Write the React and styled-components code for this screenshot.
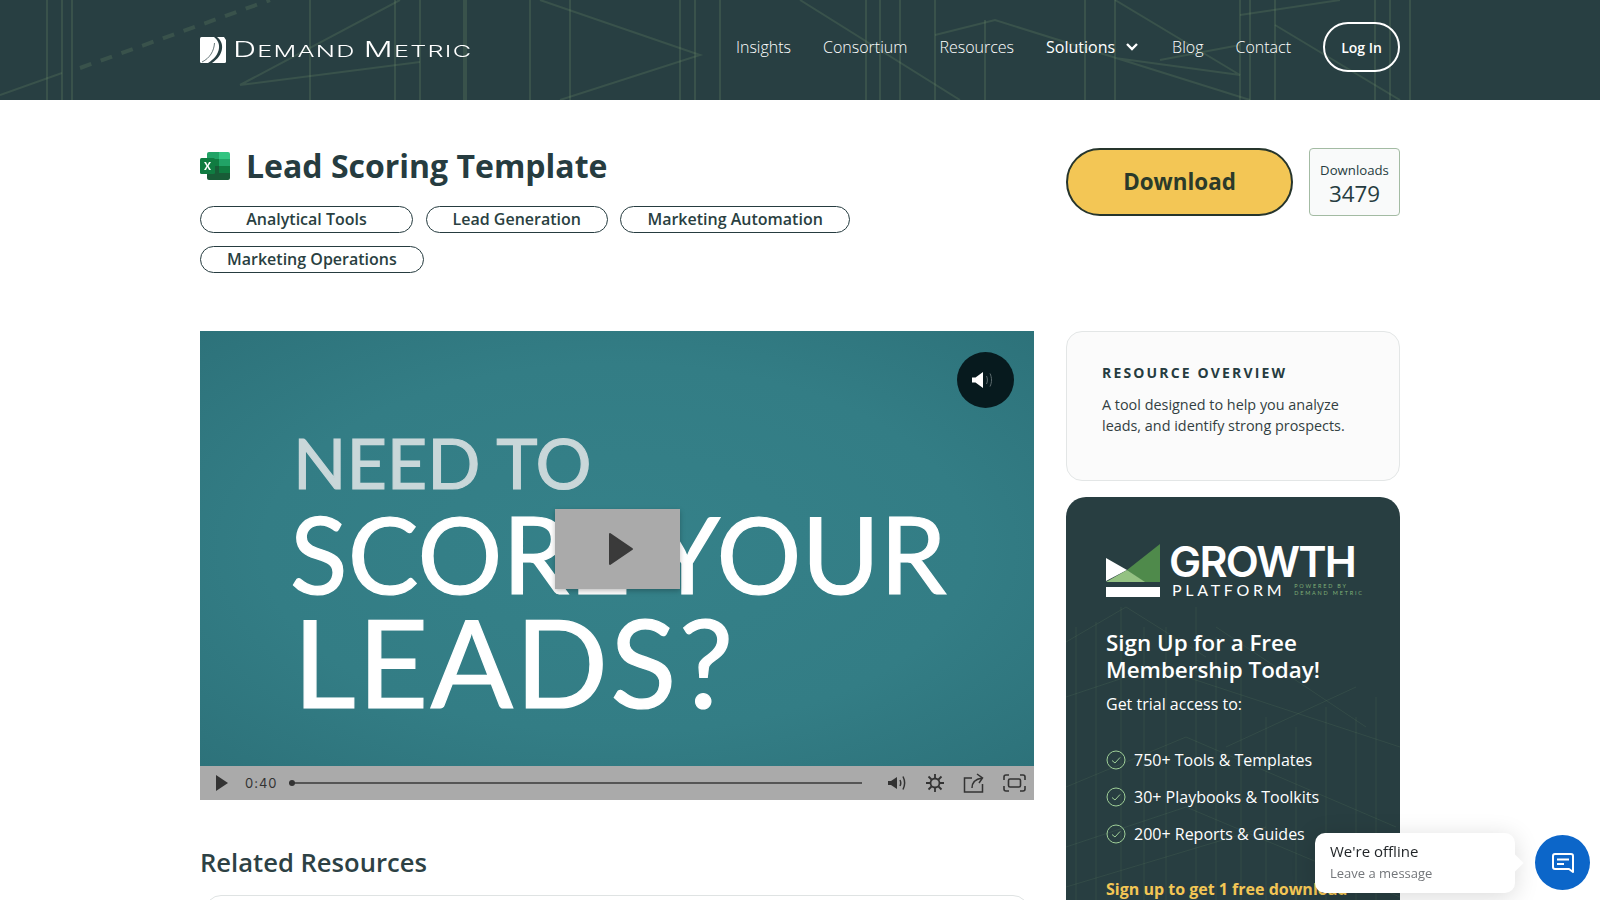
import styled, { createGlobalStyle } from "styled-components";

const GlobalStyle = createGlobalStyle`
  * { box-sizing: border-box; }
  html, body { margin: 0; height: 900px; overflow: hidden; background: #fff; }
  body { font-family: "Open Sans", "Liberation Sans", sans-serif; color: #263c40; }
`;

const navItems = ["Insights", "Consortium", "Resources", "Solutions", "Blog", "Contact"];
const tags = ["Analytical Tools", "Lead Generation", "Marketing Automation", "Marketing Operations"];
const perks = ["750+ Tools & Templates", "30+ Playbooks & Toolkits", "200+ Reports & Guides"];

const App = () => {
  return (
    <>
      <GlobalStyle />
      <Header>
        <HeaderLines viewBox="0 0 1600 100" preserveAspectRatio="none">
          <g stroke="#7f9f73" strokeOpacity="0.2" strokeWidth="2" fill="none">
            <path d="M47 0V100M62 0V100M72 0V100M310 0V100M395 0V100M420 0V100M530 0V100M570 0V100M680 0V100M695 0V100M720 0V100" />
            <path d="M465 0V100" strokeWidth="4" />
            <path d="M866 0V100M880 0V100M900 0V100M935 0V100M985 20V100M1085 0V100M1115 0V100M1240 0V100M1250 0V100M1275 0V100M1375 0V100M1390 0V100M1410 0V100" />
            <path d="M0 95L62 73M240 85L400 0M540 0L700 55L560 100M240 85L420 62" />
            <path d="M80 68L270 0" strokeDasharray="12 10" strokeWidth="4" />
            <path d="M935 35L995 20L1250 100M800 0L960 100M1115 0L1240 75L1115 58M1240 45L1160 60M1240 15L1340 0M1275 25L1400 100" />
          </g>
        </HeaderLines>
        <HeaderInner>
          <Logo>
            <svg width="26" height="26" viewBox="0 0 26 26">
              <rect width="26" height="26" rx="1.500" fill="#fff" />
              <path d="M14 0C22 6 21 18 8 26H12C24 18 25 6 17 0Z" fill="#283f42" />
              <path d="M2 25C10 21 14 14 14.500 6" stroke="#283f42" strokeWidth="0.7" fill="none" />
              <path d="M24 0H26V3Z" fill="#283f42" />
            </svg>
            <LogoText>
              <LogoCap>D</LogoCap>EMAND <LogoCap>M</LogoCap>ETRIC
            </LogoText>
          </Logo>
          <Nav>
            {navItems.map((item) => (
              <NavLink key={item} $active={item === "Solutions"}>
                {item}
                {item === "Solutions" && (
                  <svg width="16" height="10" viewBox="0 0 16 10" fill="none">
                    <path d="M3 2L8 7L13 2" stroke="#fff" strokeWidth="2.400" />
                  </svg>
                )}
              </NavLink>
            ))}
            <LoginButton>Log In</LoginButton>
          </Nav>
        </HeaderInner>
      </Header>

      <Page>
        <TopRow>
          <TitleBlock>
            <TitleRow>
              <svg width="30" height="28" viewBox="0 0 30 28">
                <path d="M7 2a2 2 0 0 1 2-2h10v7H7Z" fill="#21a366" />
                <path d="M19 0h9a2 2 0 0 1 2 2v5H19Z" fill="#33c481" />
                <rect x="7" y="7" width="12" height="7" fill="#107c41" />
                <rect x="19" y="7" width="11" height="7" fill="#21a366" />
                <rect x="7" y="14" width="12" height="7" fill="#185c37" />
                <rect x="19" y="14" width="11" height="7" fill="#107c41" />
                <path d="M7 21h23v5a2 2 0 0 1-2 2H9a2 2 0 0 1-2-2Z" fill="#185c37" />
                <rect y="6" width="15" height="16" rx="1.500" fill="#107c41" />
                <path d="M4 10h2l1.500 3L9 10h2l-2.500 4L11 18H9l-1.500-3L6 18H4l2.500-4Z" fill="#fff" />
              </svg>
              <Title>Lead Scoring Template</Title>
            </TitleRow>
            <Tags>
              {tags.map((tag, i) => (
                <Tag key={tag} $wide={i === 0}>
                  {tag}
                </Tag>
              ))}
            </Tags>
          </TitleBlock>
          <Actions>
            <DownloadButton>Download</DownloadButton>
            <DownloadCount>
              <CountLabel>Downloads</CountLabel>
              <CountValue>3479</CountValue>
            </DownloadCount>
          </Actions>
        </TopRow>

        <Columns>
          <MainColumn>
            <Video>
              <Poster>
                <PosterLine $size={70} $height={69} $muted>
                  NEED TO
                </PosterLine>
                <PosterLine $size={106} $height={105} $top={4} $left={-3} $spacing={0.300}>
                  SCORE YOUR
                </PosterLine>
                <PosterLine $size={122} $height={120} $top={-5} $spacing={2.200}>
                  LEADS?
                </PosterLine>
              </Poster>
              <MuteBadge>
                <svg width="24" height="18" viewBox="0 0 24 18">
                  <path d="M1 6.500h3.500L12 1v16l-7.500-5.500H1Z" fill="#fff" />
                  <path d="M15.500 5c1.200 2.500 1.200 5.500 0 8M19 2.500c2 4 2 9 0 13" stroke="#5d6b6e" strokeWidth="1" fill="none" />
                </svg>
              </MuteBadge>
              <BigPlay>
                <svg width="26" height="34" viewBox="0 0 26 34">
                  <path d="M2 2L24 17L2 32Z" fill="#3a3a3a" stroke="#3a3a3a" strokeWidth="2" strokeLinejoin="round" />
                </svg>
              </BigPlay>
              <ControlBar>
                <svg width="12" height="16" viewBox="0 0 12 16">
                  <path d="M0 0L12 8L0 16Z" fill="#333" />
                </svg>
                <TimeLabel>0:40</TimeLabel>
                <Track />
                <ControlIcons>
                  <svg width="20" height="18" viewBox="0 0 20 18" fill="none">
                    <path d="M1 7h3l6-4v12l-6-4H1Z" fill="#333" />
                    <path d="M13 6c1 2 1 4 0 6M16 2.500c2 4 2 9 0 13" stroke="#333" strokeWidth="1.500" />
                  </svg>
                  <svg width="20" height="20" viewBox="0 0 20 20" fill="none" stroke="#333" strokeWidth="1.800">
                    <circle cx="10" cy="10" r="4.500" />
                    <path d="M10 1v4M10 15v4M1 10h4M15 10h4M3.500 3.500l3 3M13.500 13.500l3 3M16.500 3.500l-3 3M6.500 13.500l-3 3" />
                  </svg>
                  <svg width="22" height="20" viewBox="0 0 22 20" fill="none" stroke="#333" strokeWidth="1.500">
                    <path d="M9 5H1.500v14h18v-8" />
                    <path d="M9 15c0-6 4-9 10-10M14 1l5.500 4L16 10" />
                  </svg>
                  <svg width="23" height="18" viewBox="0 0 23 18" fill="none" stroke="#333" strokeWidth="1.600">
                    <path d="M1 6V3a2 2 0 0 1 2-2h3M17 1h3a2 2 0 0 1 2 2v3M22 12v3a2 2 0 0 1-2 2h-3M6 17H3a2 2 0 0 1-2-2v-3" />
                    <rect x="5.500" y="5" width="12" height="8" rx="1.500" />
                  </svg>
                </ControlIcons>
              </ControlBar>
            </Video>
            <SectionTitle>Related Resources</SectionTitle>
            <RelatedCard />
          </MainColumn>

          <Sidebar>
            <OverviewCard>
              <OverviewTitle>Resource Overview</OverviewTitle>
              <OverviewText>
                A tool designed to help you analyze leads, and identify strong prospects.
              </OverviewText>
            </OverviewCard>
            <GrowthCard>
              <CardLines viewBox="0 0 334 410" preserveAspectRatio="none">
                <g stroke="#7f9f73" strokeOpacity="0.13" fill="none">
                  <path d="M10 130V410M30 125V410M55 110V410M78 130V410M100 130V410M130 110V410M150 140V410M175 180V410M200 220V410M230 230V410M260 210V410M290 220V410M310 200V410" />
                  <path d="M0 145L60 110L140 160M150 130L300 230M0 290L120 240L330 330M0 350L120 310L334 400M160 250L290 190M0 200L90 170L334 250M0 390L200 330" />
                </g>
              </CardLines>
              <GrowthLogo>
                <svg width="54" height="53" viewBox="0 0 54 53">
                  <path d="M0 14L21 26L0 37Z" fill="#fff" />
                  <path d="M54 0V38H38L21 26Z" fill="#4f8a4b" />
                  <path d="M21 26L39 38H0Z" fill="#94c282" />
                  <rect y="43" width="54" height="10" fill="#fff" />
                </svg>
                <GrowthWords>
                  <GrowthTitle>GROWTH</GrowthTitle>
                  <PlatformRow>
                    <PlatformText>PLATFORM</PlatformText>
                    <PoweredBy>
                      POWERED BY
                      <br />
                      DEMAND METRIC
                    </PoweredBy>
                  </PlatformRow>
                </GrowthWords>
              </GrowthLogo>
              <GrowthHeading>Sign Up for a Free Membership Today!</GrowthHeading>
              <TrialText>Get trial access to:</TrialText>
              <PerkList>
                {perks.map((perk) => (
                  <Perk key={perk}>
                    <svg width="20" height="20" viewBox="0 0 20 20" fill="none" stroke="#9fcf98" strokeWidth="1">
                      <circle cx="10" cy="10" r="9" />
                      <path d="M6 10.500L9 13L14 7.500" />
                    </svg>
                    {perk}
                  </Perk>
                ))}
              </PerkList>
              <FreeDownload>Sign up to get 1 free download</FreeDownload>
            </GrowthCard>
          </Sidebar>
        </Columns>
      </Page>

      <ChatBubble>
        <ChatTitle>We're offline</ChatTitle>
        <ChatText>Leave a message</ChatText>
      </ChatBubble>
      <ChatButton>
        <svg width="24" height="24" viewBox="0 0 24 24" fill="none">
          <path d="M4 3h16a2 2 0 0 1 2 2v16l-4-3H4a2 2 0 0 1-2-2V5a2 2 0 0 1 2-2Z" stroke="#fff" strokeWidth="2" strokeLinejoin="round" />
          <path d="M6 8.500h12M6 13h7" stroke="#fff" strokeWidth="2" />
        </svg>
      </ChatButton>
    </>
  );
};

export default App;

const Header = styled.header`
  position: relative;
  height: 100px;
  background: #283f42;
  overflow: hidden;
`;

const HeaderLines = styled.svg`
  position: absolute;
  inset: 0;
  width: 100%;
  height: 100%;
`;

const HeaderInner = styled.div`
  position: relative;
  width: 1200px;
  height: 100%;
  margin: 0 auto;
  display: flex;
  align-items: center;
  justify-content: space-between;
`;

const Logo = styled.div`
  display: flex;
  align-items: center;
  gap: 7px;
`;

const LogoText = styled.span`
  display: inline-block;
  font-family: Inter, sans-serif;
  font-size: 16.500px;
  font-weight: 300;
  line-height: 26px;
  letter-spacing: 0.800px;
  color: #fff;
  white-space: nowrap;
  transform: scaleX(1.53);
  transform-origin: left center;
`;

const LogoCap = styled.span`
  font-size: 21px;
`;

const Nav = styled.nav`
  display: flex;
  align-items: center;
  gap: 32px;
  margin-top: -6px;
`;

const NavLink = styled.a`
  display: flex;
  align-items: center;
  gap: 9px;
  font-size: 16px;
  font-weight: ${(p) => (p.$active ? 500 : 300)};
  color: #fff;
  white-space: nowrap;
`;

const LoginButton = styled.button`
  width: 77px;
  height: 50px;
  border: 2px solid #fff;
  border-radius: 25px;
  background: transparent;
  color: #fff;
  font-family: inherit;
  font-size: 14px;
  font-weight: 600;
`;

const Page = styled.main`
  width: 1200px;
  margin: 0 auto;
`;

const TopRow = styled.section`
  display: flex;
  justify-content: space-between;
  padding-top: 48px;
`;

const TitleBlock = styled.div`
  width: 700px;
`;

const TitleRow = styled.div`
  display: flex;
  align-items: center;
  gap: 16px;
  height: 36px;
`;

const Title = styled.h1`
  margin: 0;
  font-size: 32px;
  line-height: 36px;
  font-weight: 700;
  color: #263c40;
  white-space: nowrap;
`;

const Tags = styled.div`
  display: flex;
  flex-wrap: wrap;
  gap: 13px 12.500px;
  margin-top: 22px;
`;

const Tag = styled.span`
  display: inline-flex;
  align-items: center;
  justify-content: center;
  height: 27px;
  padding: 0 26px 2px;
  min-width: ${(p) => (p.$wide ? "213px" : "0")};
  border: 1px solid #263c40;
  border-radius: 14px;
  font-size: 16px;
  font-weight: 600;
  color: #2a3f41;
  white-space: nowrap;
`;

const Actions = styled.div`
  display: flex;
  gap: 16px;
  height: 68px;
`;

const DownloadButton = styled.button`
  width: 227px;
  height: 68px;
  padding-bottom: 2px;
  border: 2px solid #26352c;
  border-radius: 34px;
  background: #f3c655;
  color: #2b3a2a;
  font-family: inherit;
  font-size: 22.400px;
  font-weight: 700;
`;

const DownloadCount = styled.div`
  width: 91px;
  height: 68px;
  padding-top: 4px;
  border: 1px solid #a3bba3;
  border-radius: 4px;
  background: #f9fafa;
  display: flex;
  flex-direction: column;
  align-items: center;
  justify-content: center;
`;

const CountLabel = styled.span`
  font-size: 13.200px;
  line-height: 18px;
  font-weight: 500;
`;

const CountValue = styled.span`
  margin-top: 1px;
  font-size: 22.400px;
  line-height: 28px;
  font-weight: 500;
`;

const Columns = styled.div`
  display: grid;
  grid-template-columns: 834px 334px;
  gap: 32px;
  margin-top: 58px;
`;

const MainColumn = styled.div`
  min-width: 0;
`;

const Video = styled.div`
  position: relative;
  height: 469px;
  display: flex;
  flex-direction: column;
  overflow: hidden;
`;

const Poster = styled.div`
  flex: 1;
  padding: 97px 0 0 93px;
  background: radial-gradient(ellipse at center, #358189 0%, #337d85 60%, #2d727a 100%);
  display: flex;
  flex-direction: column;
`;

const PosterLine = styled.div`
  margin-top: ${(p) => p.$top || 0}px;
  margin-left: ${(p) => p.$left || 0}px;
  font-family: Lato, sans-serif;
  font-size: ${(p) => p.$size}px;
  line-height: ${(p) => p.$height}px;
  letter-spacing: ${(p) => p.$spacing || 0}px;
  font-weight: 400;
  color: ${(p) => (p.$muted ? "#c9d7d9" : "#fff")};
  -webkit-text-stroke: 1.200px ${(p) => (p.$muted ? "#c9d7d9" : "#fff")};
  white-space: nowrap;
  filter: blur(0.500px);
`;

const MuteBadge = styled.div`
  position: absolute;
  top: 21px;
  right: 20px;
  width: 57px;
  height: 56px;
  padding-right: 5px;
  border-radius: 50%;
  background: #071a1e;
  display: flex;
  align-items: center;
  justify-content: center;
`;

const BigPlay = styled.div`
  position: absolute;
  left: 355px;
  top: 178px;
  width: 125px;
  height: 80px;
  padding-left: 6px;
  background: #aaa;
  box-shadow: 0 2px 5px rgba(0, 0, 0, 0.25);
  display: flex;
  align-items: center;
  justify-content: center;
`;

const ControlBar = styled.div`
  height: 34px;
  background: #aaa;
  display: flex;
  align-items: center;
  padding: 0 8px 0 16px;
`;

const TimeLabel = styled.span`
  margin: 0 0 1px 17px;
  font-family: Inter, sans-serif;
  font-size: 13px;
  letter-spacing: 1px;
  color: #333;
`;

const Track = styled.div`
  position: relative;
  width: 573px;
  height: 2px;
  margin-left: 11px;
  background: #555;

  &::before {
    content: "";
    position: absolute;
    left: 0;
    top: -2px;
    width: 6px;
    height: 6px;
    border-radius: 50%;
    background: #333;
  }
`;

const ControlIcons = styled.div`
  margin-left: auto;
  display: flex;
  align-items: center;
  gap: 18px;
`;

const SectionTitle = styled.h2`
  margin: 47px 0 0;
  font-size: 25.600px;
  line-height: 32px;
  font-weight: 600;
  color: #2d4144;
`;

const RelatedCard = styled.div`
  height: 120px;
  margin: 16px 5px 0;
  border: 1px solid #dfe3e3;
  border-radius: 16px;
`;

const Sidebar = styled.aside`
  display: flex;
  flex-direction: column;
  gap: 16px;
`;

const OverviewCard = styled.div`
  height: 150px;
  padding: 32px 36px 32px 35px;
  border: 1px solid #e3e6e6;
  border-radius: 16px;
  background: #fbfbfb;
`;

const OverviewTitle = styled.h3`
  margin: 0;
  font-size: 14px;
  line-height: 18px;
  font-weight: 700;
  letter-spacing: 2.150px;
  text-transform: uppercase;
  color: #263c40;
`;

const OverviewText = styled.p`
  margin: 12px 0 0;
  font-size: 14.400px;
  line-height: 21px;
  color: #333f42;
`;

const GrowthCard = styled.div`
  position: relative;
  height: 520px;
  padding: 47px 30px 0 40px;
  border-radius: 20px;
  background: #283e41;
  overflow: hidden;
`;

const CardLines = styled.svg`
  position: absolute;
  left: 0;
  top: 0;
  width: 100%;
  height: 410px;
`;

const GrowthLogo = styled.div`
  position: relative;
  display: flex;
  align-items: flex-start;
  gap: 9px;
  height: 56px;
`;

const GrowthWords = styled.div`
  display: flex;
  flex-direction: column;
`;

const GrowthTitle = styled.span`
  font-family: Inter, sans-serif;
  font-size: 43px;
  line-height: 34px;
  font-weight: 600;
  letter-spacing: -1.800px;
  color: #fff;
`;

const PlatformRow = styled.div`
  display: flex;
  align-items: center;
  gap: 9px;
  margin: 3px 0 0 3px;
`;

const PlatformText = styled.span`
  font-family: Lato, sans-serif;
  font-size: 16px;
  font-weight: 400;
  line-height: 18px;
  letter-spacing: 3.700px;
  color: #fff;
`;

const PoweredBy = styled.span`
  font-family: Lato, sans-serif;
  font-size: 5.500px;
  line-height: 7px;
  letter-spacing: 1.800px;
  color: #7fae76;
  white-space: nowrap;
`;

const GrowthHeading = styled.h3`
  position: relative;
  margin: 29px 0 0;
  width: 240px;
  font-size: 22.400px;
  line-height: 27px;
  font-weight: 600;
  color: #fff;
`;

const TrialText = styled.p`
  position: relative;
  margin: 8px 0 0;
  font-size: 16px;
  line-height: 26px;
  color: #fff;
`;

const PerkList = styled.ul`
  position: relative;
  list-style: none;
  margin: 31px 0 0;
  padding: 0;
  display: flex;
  flex-direction: column;
  gap: 13px;
`;

const Perk = styled.li`
  display: flex;
  align-items: center;
  gap: 8px;
  height: 24px;
  font-size: 16px;
  color: #fff;
  white-space: nowrap;
`;

const FreeDownload = styled.p`
  position: relative;
  margin: 31px 0 0;
  font-size: 16px;
  line-height: 24px;
  font-weight: 700;
  color: #f3c655;
  white-space: nowrap;
`;

const ChatBubble = styled.div`
  position: fixed;
  left: 1315px;
  top: 833px;
  width: 200px;
  height: 60px;
  padding: 7px 15px;
  background: #fff;
  border-radius: 10px;
  box-shadow: 0 4px 24px rgba(0, 0, 0, 0.15);

  &::after {
    content: "";
    position: absolute;
    right: -6px;
    top: 24px;
    width: 12px;
    height: 12px;
    background: #fff;
    transform: rotate(45deg);
  }
`;

const ChatTitle = styled.div`
  font-size: 15px;
  line-height: 22px;
  color: #1f2326;
`;

const ChatText = styled.div`
  font-size: 13px;
  line-height: 22px;
  color: #73767a;
`;

const ChatButton = styled.div`
  position: fixed;
  left: 1535px;
  top: 835px;
  width: 55px;
  height: 55px;
  border-radius: 50%;
  background: #0c66c9;
  display: flex;
  align-items: center;
  justify-content: center;
`;
